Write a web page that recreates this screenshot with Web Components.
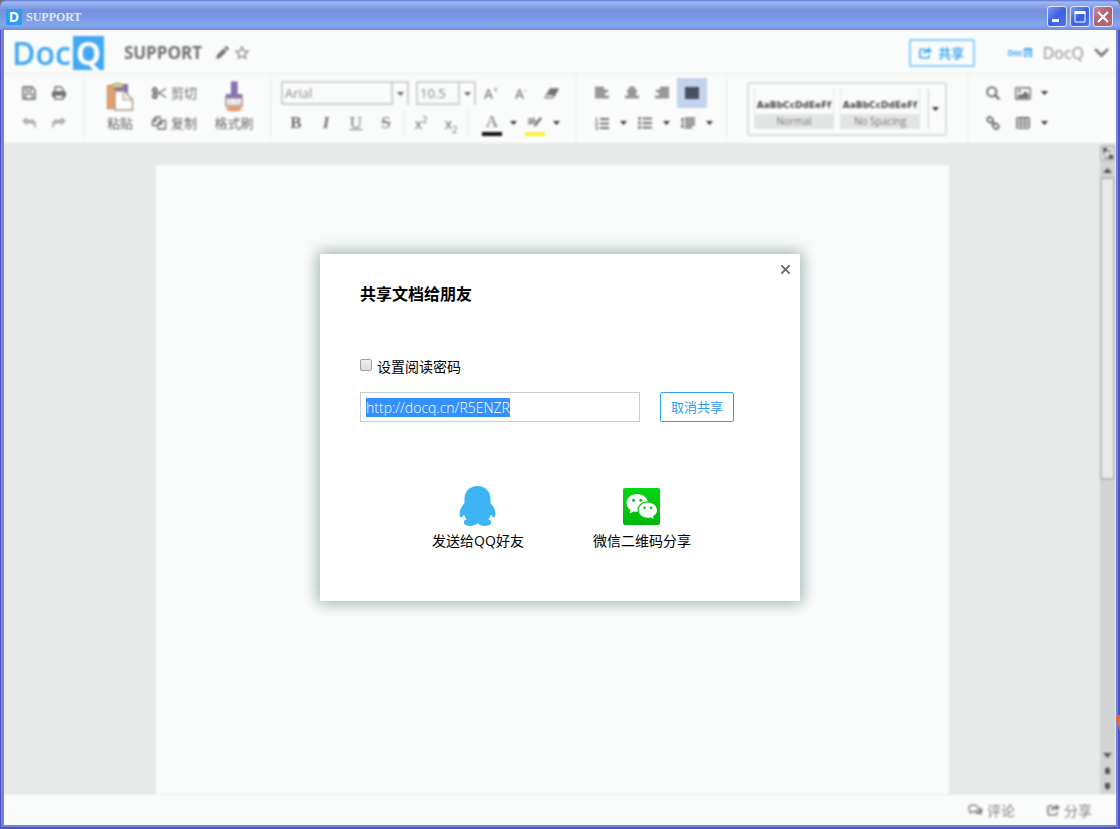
<!DOCTYPE html>
<html lang="zh-CN">
<head>
<meta charset="utf-8">
<title>SUPPORT</title>
<style>
  body { margin: 0; font-family: "Open Sans", "Noto Sans CJK SC", sans-serif; font-size: 14px; color: #000; }
</style>
</head>
<body>
<app-window caption="SUPPORT">
  <doc-editor></doc-editor>
  <share-dialog slot="dialog"></share-dialog>
</app-window>

<script>
const ICONS = {
  save: [14, 14, '<path d="M1 1h9l3 3v9H1z" fill="none" stroke="currentColor" stroke-width="1.6"/><path d="M4 1h5v4H4zM3.500 8h7v5h-7z" fill="none" stroke="currentColor" stroke-width="1.300"/>'],
  print: [14, 14, '<path d="M3 6V1h6l2 2v3" fill="none" stroke="currentColor" stroke-width="1.4"/><path d="M0 7q0-2 2-2h10q2 0 2 2v4h-2V9H2v2H0z" fill="currentColor"/><path d="M2.700 9h8.600v4H2.700z" fill="none" stroke="currentColor" stroke-width="1.400"/>'],
  undo: [14, 14, '<path d="M0 5l5-4v2.500h4q5 0 5 5.500 0 2-1.500 4 .5-5.500-3.500-5.500H5V9.500z" fill="currentColor" opacity=".55"/>'],
  redo: [14, 14, '<path d="M14 5L9 1v2.500H5Q0 3.500 0 9q0 2 1.500 4Q1 7.500 5 7.500h4v2z" fill="currentColor" opacity=".55"/>'],
  paste: [28, 30, '<rect x="1.500" y="3.500" width="20" height="23" fill="#e5a06a" stroke="#b98560"/><rect x="9" y="2" width="13" height="9" fill="#8873b4"/><path d="M6 2.500q6-3 11 0v3H6z" fill="#d9d37a" stroke="#9b966a"/><path d="M9 9h9l8.500 8.500V28H9z" fill="#fff" stroke="#a39488" stroke-width="1.400"/><path d="M17 8v10h9.500z" fill="#eee" stroke="#a39488"/>'],
  brush: [20, 30, '<rect x="7.500" y="0" width="5.500" height="12" fill="#8873b4" stroke="#75639c"/><path d="M1.500 16v-3q0-1 1-1h15q1 0 1 1v3z" fill="#8873b4"/><path d="M2 16h16v8H2z" fill="#fff" stroke="#a08a88" stroke-width="1.500"/><path d="M5.500 17v6M9 19v5M12.500 17v6M15.500 19v5" stroke="#c8bcb8" stroke-width="1.300"/><ellipse cx="10" cy="27" rx="8" ry="2.600" fill="#ee9a6a"/>'],
  cut: [14, 12, '<g fill="none" stroke="currentColor" stroke-width="1.800"><circle cx="2.800" cy="3" r="2"/><circle cx="2.800" cy="9" r="2"/></g><path d="M4.500 4.200L14 10.500M4.500 7.800L14 1.500" stroke="currentColor" stroke-width="1.300"/>'],
  copy: [14, 14, '<g fill="none" stroke="currentColor" stroke-width="1.300"><path d="M5.500 9.500h-5V5L4 1h4v3M4 1v4H.5"/><path d="M6 8l3.500-3.500h4V13H6zM9.500 4.500V8H6"/></g>'],
  eraser: [15, 11, '<path d="M5.500 1q.5-.8 1.500-.8h7q1.200 0 .6 1.200L10 9.500q-.6.900-1.600.900H1.200Q0 10.400.6 9.200z" fill="currentColor"/><path d="M2.800 7h5.400L10 9l-1.600.6H1.500z" fill="#fff" opacity=".75"/>'],
  left: [14, 12, '<path d="M0 1h9M0 4h13M0 7h10M0 10h14" stroke="currentColor" stroke-width="2.400" opacity=".85"/>'],
  center: [14, 12, '<path d="M4 1h6M2 4h10M3 7h8M0 10h14" stroke="currentColor" stroke-width="2.400" opacity=".85"/>'],
  right: [14, 12, '<path d="M5 1h9M1 4h13M4 7h10M0 10h14" stroke="currentColor" stroke-width="2.400" opacity=".85"/>'],
  justify: [14, 12, '<path d="M0 0h14v12H0z" fill="#5a6070"/><path d="M0 1.200h14M0 4.400h14M0 7.600h14M0 10.800h14" stroke="#404858" stroke-width="2.200"/>'],
  numbered: [14, 13, '<path d="M1.500 0v3.500M.5 3.500h2M.5 5.500h2v1.500l-2 1h2M.5 10h2v2.500h-2" fill="none" stroke="currentColor"/><path d="M5 2h9M5 6.500h9M5 11h9" stroke="currentColor" stroke-width="1.800"/>'],
  bullets: [14, 12, '<path d="M0 1.500h3M0 6h3M0 10.500h3" stroke="currentColor" stroke-width="2.400"/><path d="M4.500 1.500H14M4.500 6H14M4.500 10.500H14" stroke="currentColor" stroke-width="1.800"/>'],
  spacing: [14, 12, '<path d="M4 1.500h10M4 4.500h10M4 7.500h10M4 10.500h7" stroke="currentColor" stroke-width="1.800"/><path d="M1.500 1v10M0 2h3M0 10h3" stroke="currentColor" stroke-width="1.500"/>'],
  search: [14, 14, '<circle cx="5.800" cy="5.800" r="4.600" fill="none" stroke="currentColor" stroke-width="2"/><path d="M9.300 9.300l3.500 3.500" stroke="currentColor" stroke-width="2.400" stroke-linecap="round"/>'],
  image: [16, 13, '<rect x=".7" y=".7" width="14.600" height="11.600" rx="1" fill="none" stroke="currentColor" stroke-width="1.400"/><circle cx="4.500" cy="4" r="1.400" fill="currentColor"/><path d="M2.500 11V9L5 6.800l1.600 1.500L10.500 4l3.200 3.500V11z" fill="currentColor"/>'],
  link: [14, 14, '<g fill="none" stroke="currentColor" stroke-width="1.900"><rect x="1" y="1.500" width="6" height="4.600" rx="2.200" transform="rotate(45 4 4)"/><rect x="7" y="8" width="6" height="4.600" rx="2.200" transform="rotate(45 10 10)"/><path d="M5.500 5.500l3.200 3.200"/></g>'],
  table: [14, 12, '<rect x=".7" y=".7" width="12.600" height="10.600" rx="1" fill="none" stroke="currentColor" stroke-width="1.300"/><path d="M0 1.500h14M0 4.700h14M0 7.900h14M5 1v10M9.200 1v10" stroke="currentColor" stroke-width="1.200"/>'],
  caret: [7, 4, '<path d="M0 0h7L3.500 4z" fill="currentColor"/>'],
  caretUp: [9, 5, '<path d="M0 5h9L4.500 0z" fill="currentColor"/>'],
  caretDown: [9, 5, '<path d="M0 0h9L4.500 5z" fill="currentColor"/>'],
  pencil: [13, 13, '<path d="M0 13l1-4 6.500-6.500 3 3L4 12zM8.300 1.700L9.600.4q.7-.6 1.500 0l1.500 1.500q.6.700 0 1.400l-1.300 1.400z" fill="currentColor"/>'],
  star: [14, 13, '<path d="M7 1l1.800 3.800 4.200.5-3.100 2.900.8 4.100L7 10.300l-3.700 2 .8-4.100L1 5.300l4.200-.5z" fill="none" stroke="currentColor" stroke-width="1.300"/>'],
  share: [13, 12, '<path d="M6 2H2.500Q1 2 1 3.500v6Q1 11 2.500 11h6Q10 11 10 9.500V8" fill="none" stroke="currentColor" stroke-width="1.700"/><path d="M9 0l4 3.500L9 7V5Q5.500 4.800 4.500 8.300 3.200 2.200 9 2z" fill="currentColor"/>'],
  comments: [15, 12, '<path d="M5.500 1C2.500 1 .7 2.600.7 4.400c0 1.200.7 2.100 1.800 2.700L2 9l2.300-1.300C8 8 10.300 6.400 10.300 4.400 10.300 2.500 8.300 1 5.500 1z" fill="none" stroke="currentColor" stroke-width="1.300"/><path d="M11.500 3.200c3.800 1.300 4.200 4.400 1.600 6l.9 2.300-3-1.600c-2 .2-3.800-.3-4.700-1.200 3.600 0 5.700-2.200 5.200-5.500z" fill="currentColor"/>'],
  chevron: [15, 9, '<path d="M1 1l6.500 6.500L14 1" fill="none" stroke="currentColor" stroke-width="2.400"/>'],
  layout: [15, 15, '<rect width="15" height="15" fill="#e0e2e1"/><rect x=".7" y=".7" width="13.600" height="13.600" fill="none" stroke="#aaa"/><path d="M4 9V5h7M4 12h6V8" fill="none" stroke="currentColor"/><path d="M3 2h4v3H3zM9 9h4v4H9z" fill="currentColor"/>'],
  prev: [5, 7, '<path d="M0 7V2l2.500-2L5 2v5z" fill="currentColor"/>'],
  next: [5, 7, '<path d="M0 0v5l2.500 2L5 5V0z" fill="currentColor"/>'],
  close: [11, 11, '<path d="M1.300 1.300l8.400 8.400M9.700 1.300L1.300 9.700" stroke="currentColor" stroke-width="1.800"/>'],
  winMin: [12, 12, '<path d="M1 8h7v3H1z" fill="#fff"/>'],
  winMax: [12, 12, '<path d="M1 1.500h10V11H1z" fill="none" stroke="#fff"/><path d="M.5 0h11v3H.5z" fill="#fff"/>'],
  winClose: [12, 12, '<path d="M1 1l10 10M11 1L1 11" stroke="#fff" stroke-width="2.200"/>'],
  highlight: [14, 13, '<path d="M0 4.500q3-2 3.500.5v4M3.500 6Q.5 6 .5 8t3 0M5.500 2v7q3 1 3-1.500T5.500 6" fill="none" stroke="currentColor" stroke-width="1.200"/><path d="M6 12l1-3 5-7 2 1.500-5.500 7z" fill="currentColor"/>'],
  qq: [38, 40, '<path d="M18.500 0C10.500 0 5.500 5.600 5.500 13v4C2.500 20.500.6 24 .6 27.500c0 2.500.7 4 1.600 3.900.9-.1 2-1.500 2.800-3 .6 1.900 1.500 3.500 2.700 4.900-2 .7-2.900 1.700-2.900 2.900C4.800 38.500 7.500 40 11.500 40c3 0 5.600-1.200 7-2.900 1.400 1.700 4 2.900 7 2.900 4 0 6.700-1.500 6.700-3.800 0-1.200-.9-2.200-2.900-2.900 1.200-1.400 2.100-3 2.700-4.900.8 1.500 1.900 2.900 2.800 3 .9.100 1.600-1.400 1.600-3.900 0-3.500-1.900-7-4.900-10.500v-4C31.500 5.600 26.500 0 18.500 0z" fill="#3cb4f6"/>'],
  wechat: [38, 38, '<defs><linearGradient id="g" x2="0" y2="1"><stop stop-color="#05d812"/><stop offset="1" stop-color="#00b80c"/></linearGradient></defs><rect width="37" height="37" rx="2" fill="url(#g)"/><path d="M14.200 6C8.200 6 3.500 10 3.500 15c0 2.900 1.600 5.400 4 7l-.8 3.600 4-2.200c1.100.3 2.300.4 3.500.4 6 0 10.700-3.900 10.700-8.800S20.200 6 14.200 6z" fill="#fff"/><path d="M24.800 13.800c-5.400 0-9.800 3.700-9.800 8.300s4.400 8.300 9.800 8.300c1 0 2-.1 2.900-.4l3.700 2-.8-3.300c2.400-1.500 4-3.900 4-6.600 0-4.600-4.400-8.300-9.800-8.300z" fill="#fff" stroke="#02c80e" stroke-width="1.200"/><g fill="#02c80e"><circle cx="10.600" cy="12.200" r="1.500"/><circle cx="17.800" cy="12.200" r="1.500"/><circle cx="21.500" cy="19.700" r="1.300"/><circle cx="28" cy="19.700" r="1.300"/></g>']
};

function define(name, markup, setup) {
  const template = document.createElement('template');
  template.innerHTML = markup;
  customElements.define(name, class extends HTMLElement {
    connectedCallback() {
      if (this.shadowRoot) return;
      this.attachShadow({ mode: 'open' }).append(template.content.cloneNode(true));
      if (setup) setup(this, this.shadowRoot);
    }
  });
}

define('ui-icon', `
  <style>:host { display: inline-flex; flex: none; } svg { display: block; overflow: visible; }</style>
  <svg aria-hidden="true"></svg>`,
  (host, root) => {
    const [w, h, body] = ICONS[host.getAttribute('name')];
    const svg = root.querySelector('svg');
    svg.setAttribute('width', w);
    svg.setAttribute('height', h);
    svg.setAttribute('viewBox', `0 0 ${w} ${h}`);
    svg.innerHTML = body;
  });

/* Toolbar button: an icon or a short label in a 30px square */
define('tool-button', `
  <style>
    :host { display: block; flex: none; width: 30px; height: 30px; }
    button { all: unset; box-sizing: border-box; width: 100%; height: 100%; display: flex; align-items: center; justify-content: center; cursor: pointer; }
    :host([active]) button { background: #c3d3ee; }
  </style>
  <button type="button"><slot></slot></button>`,
  (host, root) => root.querySelector('button').setAttribute('aria-label', host.getAttribute('label') || ''));

/* Tool button with a drop-down arrow */
define('split-button', `
  <style>
    :host { display: flex; flex: none; height: 30px; }
    button { all: unset; width: 13px; display: flex; align-items: center; justify-content: center; color: #333; cursor: pointer; }
  </style>
  <tool-button><slot></slot></tool-button>
  <button type="button" aria-label="更多"><ui-icon name="caret"></ui-icon></button>`);

/* Tall or inline button with a caption */
define('caption-button', `
  <style>
    :host { display: block; }
    button { all: unset; box-sizing: border-box; width: 100%; display: flex; align-items: center; gap: 5px; font-size: 13px; line-height: 30px; height: 30px; color: #666; cursor: pointer; }
    :host([tall]) button { flex-direction: column; gap: 0; height: 60px; padding-top: 4px; line-height: 22px; }
  </style>
  <button type="button"><slot></slot></button>`);

define('tool-group', `
  <style>
    :host { display: flex; flex: none; align-items: flex-start; padding: 4px 10px 5px; border-right: 1px solid #eceeed; }
    :host([wide]) { padding-inline: 20px; }
    :host([last]) { border: 0; }
  </style>
  <slot></slot>`);

define('combo-box', `
  <style>
    :host { display: grid; grid-template-columns: 1fr 16px; height: 24px; box-sizing: border-box; }
    select { all: unset; grid-area: 1 / 1 / 2 / 3; box-sizing: border-box; width: calc(100% - 16px); min-width: 0; border: 2px solid #cfd0d7; padding-left: 2px; font: 13px/20px "Open Sans", sans-serif; color: #888; }
    span { grid-area: 1 / 2; display: flex; align-items: center; justify-content: center; border: 2px solid #cfd0d2; border-width: 2px 2px 0 0; color: #666; pointer-events: none; }
  </style>
  <select></select><span><ui-icon name="caret"></ui-icon></span>`,
  (host, root) => {
    const select = root.querySelector('select');
    select.setAttribute('aria-label', host.getAttribute('label'));
    select.add(new Option(host.getAttribute('value')));
  });

define('editor-toolbar', `
  <style>
    :host { display: flex; flex: none; border-bottom: 1px solid #e4e6e5; border-top: 1px solid #eceeed; color: #707070; background: #fafcfb; }
    .rows { display: flex; flex-direction: column; }
    .row { display: flex; align-items: center; height: 30px; }
    .clip { display: grid; grid-template-columns: 50px 63px 52px; }
    .clip .rows { padding-left: 7px; }
    combo-box.face { width: 128px; margin-right: 7px; }
    combo-box.size { width: 60px; }
    .serif { font: 17px "Liberation Serif", serif; }
    .sans { font: 14px "Noto Sans", sans-serif; }
    b.serif { font-weight: 700; }
    sup, sub { font-size: 9px; line-height: 0; }
    .rule { width: 1px; height: 28px; background: #eaecec; margin-inline: 2px; }
    .swatch { display: flex; flex-direction: column; align-items: center; justify-content: flex-end; height: 22px; border-bottom: 4px solid #111; width: 20px; line-height: 20px; }
    .swatch.marker { border-color: #fbf03a; justify-content: center; }
    .colors { margin-left: 6px; }
    .styles { display: flex; align-items: center; box-sizing: border-box; width: 200px; height: 54px; margin-top: 4px; padding-left: 5px; gap: 6px; border: 2px solid #dcdedd; border-radius: 2px; }
    .styles button { all: unset; box-sizing: border-box; width: 80px; height: 40px; display: flex; flex-direction: column; justify-content: flex-end; text-align: center; border-inline: 1px solid #e4e6e5; font-size: 10px; line-height: 15px; color: #777; cursor: pointer; }
    .styles b { font: 700 9px/18px "DejaVu Sans", sans-serif; color: #444; }
    .styles button span { background: #e3e5e4; }
    .styles .more { width: 14px; align-items: center; justify-content: center; border: 0; border-left: 1px solid #ccc; margin-left: 2px; color: #333; }
  </style>
  <tool-group>
    <div class="rows">
      <div class="row"><tool-button label="保存"><ui-icon name="save"></ui-icon></tool-button><tool-button label="打印"><ui-icon name="print"></ui-icon></tool-button></div>
      <div class="row"><tool-button label="撤销"><ui-icon name="undo"></ui-icon></tool-button><tool-button label="重做"><ui-icon name="redo"></ui-icon></tool-button></div>
    </div>
  </tool-group>
  <tool-group>
    <div class="clip">
      <caption-button tall><ui-icon name="paste"></ui-icon>粘贴</caption-button>
      <div class="rows">
        <caption-button><ui-icon name="cut"></ui-icon>剪切</caption-button>
        <caption-button><ui-icon name="copy"></ui-icon>复制</caption-button>
      </div>
      <caption-button tall><ui-icon name="brush"></ui-icon>格式刷</caption-button>
    </div>
  </tool-group>
  <tool-group>
    <div class="rows">
      <div class="row">
        <combo-box class="face" label="字体" value="Arial"></combo-box>
        <combo-box class="size" label="字号" value="10.5"></combo-box>
        <tool-button label="增大"><span class="sans">A<sup>+</sup></span></tool-button>
        <tool-button label="减小"><span class="sans">A<sup>-</sup></span></tool-button>
        <tool-button label="清除"><ui-icon name="eraser"></ui-icon></tool-button>
      </div>
      <div class="row">
        <tool-button label="粗体"><b class="serif">B</b></tool-button>
        <tool-button label="斜体"><b class="serif"><i>I</i></b></tool-button>
        <tool-button label="下划线"><u class="serif">U</u></tool-button>
        <tool-button label="删除线"><s class="serif">S</s></tool-button>
        <span class="rule"></span>
        <tool-button label="上标"><span class="sans">x<sup>2</sup></span></tool-button>
        <tool-button label="下标"><span class="sans">x<sub>2</sub></span></tool-button>
        <span class="rule"></span>
        <split-button class="colors"><span class="swatch serif">A</span></split-button>
        <split-button><span class="swatch marker"><ui-icon name="highlight"></ui-icon></span></split-button>
      </div>
    </div>
  </tool-group>
  <tool-group>
    <div class="rows">
      <div class="row">
        <tool-button label="左对齐"><ui-icon name="left"></ui-icon></tool-button>
        <tool-button label="居中"><ui-icon name="center"></ui-icon></tool-button>
        <tool-button label="右对齐"><ui-icon name="right"></ui-icon></tool-button>
        <tool-button label="两端对齐" active><ui-icon name="justify"></ui-icon></tool-button>
      </div>
      <div class="row">
        <split-button><ui-icon name="numbered"></ui-icon></split-button>
        <split-button><ui-icon name="bullets"></ui-icon></split-button>
        <split-button><ui-icon name="spacing"></ui-icon></split-button>
      </div>
    </div>
  </tool-group>
  <tool-group wide>
    <div class="styles">
      <button type="button"><b>AaBbCcDdEeFf</b><span>Normal</span></button>
      <button type="button"><b>AaBbCcDdEeFf</b><span>No Spacing</span></button>
      <button type="button" class="more" aria-label="更多样式"><ui-icon name="caret"></ui-icon></button>
    </div>
  </tool-group>
  <tool-group last>
    <div class="rows">
      <div class="row"><tool-button label="查找"><ui-icon name="search"></ui-icon></tool-button><split-button><ui-icon name="image"></ui-icon></split-button></div>
      <div class="row"><tool-button label="链接"><ui-icon name="link"></ui-icon></tool-button><split-button><ui-icon name="table"></ui-icon></split-button></div>
    </div>
  </tool-group>`);

define('brand-logo', `
  <style>
    :host { display: flex; align-items: center; gap: 2px; font: 600 32px/34px "Open Sans", sans-serif; color: #42a8f2; }
    b { width: 31px; text-align: center; background: #42a8f2; color: #fff; font-weight: 700; }
    :host([mini]) { gap: 1px; font: 700 8px/9px "Open Sans", sans-serif; }
    :host([mini]) b { width: 8px; }
  </style>
  <span>Doc</span><b>Q</b>`);

define('editor-header', `
  <style>
    :host { display: flex; flex: none; align-items: center; box-sizing: border-box; height: 43px; padding: 2px 7px 0 8px; background: #fafcfb; color: #707070; }
    h1 { margin: 0 14px 0 20px; font-size: 17px; line-height: 24px; font-weight: 700; }
    .tools { display: flex; gap: 6px; flex: 1; }
    .tools ui-icon + ui-icon { color: #888; }
    button { all: unset; box-sizing: border-box; display: flex; align-items: center; justify-content: center; gap: 6px; width: 66px; height: 28px; border: 2px solid #8ccbf7; border-radius: 2px; font-size: 13px; font-weight: 700; color: #42a8f2; cursor: pointer; }
    .mini { margin: 0 11px 0 33px; }
    a { display: flex; align-items: center; gap: 10px; font-size: 16px; line-height: 24px; color: #909090; text-decoration: none; }
    a ui-icon { color: #666; }
  </style>
  <brand-logo></brand-logo>
  <h1>SUPPORT</h1>
  <div class="tools"><ui-icon name="pencil"></ui-icon><ui-icon name="star"></ui-icon></div>
  <button type="button"><ui-icon name="share"></ui-icon>共享</button>
  <brand-logo class="mini" mini></brand-logo>
  <a href="#account">DocQ<ui-icon name="chevron"></ui-icon></a>`);

define('page-scrollbar', `
  <style>
    :host { display: flex; flex-direction: column; align-items: center; flex: none; width: 16px; box-sizing: border-box; background: #d2d4d3; color: #555; padding: 2px 1px 4px 0; }
    .up { padding: 7px 0 4px; }
    .thumb { box-sizing: border-box; width: 100%; height: 47%; border: 2px solid #b9bbba; border-radius: 2px; background: #e8eae9; }
    .end { display: flex; flex-direction: column; align-items: center; gap: 9px; margin-top: auto; }
  </style>
  <ui-icon name="layout"></ui-icon>
  <ui-icon class="up" name="caretUp"></ui-icon>
  <div class="thumb"></div>
  <div class="end"><ui-icon name="caretDown"></ui-icon><ui-icon name="prev"></ui-icon><ui-icon name="next"></ui-icon></div>`);

define('status-bar', `
  <style>
    :host { display: flex; flex: none; justify-content: flex-end; gap: 32px; height: 30px; padding-right: 24px; border-top: 1px solid #eceeed; background: #fafcfb; }
    a { display: flex; align-items: center; gap: 4px; font-size: 14px; color: #808080; text-decoration: none; }
  </style>
  <a href="#comments"><ui-icon name="comments"></ui-icon>评论</a>
  <a href="#share"><ui-icon name="share"></ui-icon>分享</a>`);

define('doc-editor', `
  <style>
    :host { display: flex; flex-direction: column; flex: 1; min-height: 0; filter: blur(1px); }
    main { display: flex; flex: 1; min-height: 0; background: #e8eae9; }
    .canvas { flex: 1; display: flex; justify-content: center; padding-top: 21px; }
    .page { width: 793px; background: #fafcfb; }
  </style>
  <editor-header></editor-header>
  <editor-toolbar></editor-toolbar>
  <main><div class="canvas"><div class="page"></div></div><page-scrollbar></page-scrollbar></main>
  <status-bar></status-bar>`);

define('title-bar', `
  <style>
    :host { display: flex; flex: none; align-items: center; gap: 3px; height: 30px; box-sizing: border-box; padding: 3px 7px 0 6px;
      background: linear-gradient(#5b74d0 0, #9db8f0 2px, #8fa9ea 5px, #7790de 10px, #7b97e2 17px, #83a8ec 25px, #7d97e4 28px, #7289dc 100%); }
    .app { width: 16px; background: #2b9df0; color: #fff; font: 700 14px/16px "Open Sans", sans-serif; text-align: center; }
    .caption { flex: 1; margin-left: 1px; font: 700 12px/16px "Liberation Serif", serif; color: #dde8fb; }
    button { all: unset; box-sizing: border-box; display: flex; align-items: center; justify-content: center; width: 20px; height: 21px; border: 1px solid #dfe6fb; border-radius: 3px; background: linear-gradient(135deg, #7f9af0, #3a5fe0 50%, #4a78ee); }
    .close { background: linear-gradient(135deg, #c98c9c, #b0606f 50%, #b56a78); }
  </style>
  <span class="app">D</span><span class="caption"></span>
  <button type="button" aria-label="最小化"><ui-icon name="winMin"></ui-icon></button>
  <button type="button" aria-label="最大化"><ui-icon name="winMax"></ui-icon></button>
  <button type="button" class="close" aria-label="关闭"><ui-icon name="winClose"></ui-icon></button>`);

define('app-window', `
  <style>
    :host { display: flex; flex-direction: column; height: 100vh; position: relative; overflow: hidden; background: #6f7478; }
    .frame { flex: 1; min-height: 0; display: flex; flex-direction: column; border-radius: 7px 7px 0 0; overflow: hidden; background: #7385de; box-shadow: inset 1px 0 #4f52c0, inset -2px 0 #4f52c0, inset 0 -2px #4f52c0; }
    .client { position: relative; flex: 1; min-height: 0; display: flex; flex-direction: column; margin: 0 4px 4px; overflow: hidden; background: #fafcfb; }
    .overlay { position: absolute; inset: 0; display: grid; place-items: center; }
    .edge { position: absolute; right: 0; top: 715px; }
  </style>
  <div class="frame">
    <title-bar></title-bar>
    <div class="client"><slot></slot><div class="overlay"><slot name="dialog"></slot></div></div>
  </div>
  <svg class="edge" width="4" height="17" aria-hidden="true"><path d="M0 3q0-3 4-3v17z" fill="#f4602c"/></svg>`,
  (host, root) => { root.querySelector('title-bar').shadowRoot.querySelector('.caption').textContent = host.getAttribute('caption'); });

define('share-target', `
  <style>
    :host { display: block; }
    a { display: flex; flex-direction: column; align-items: center; gap: 5px; font-size: 14px; line-height: 20px; color: #000; text-decoration: none; }
    .icon { display: flex; align-items: flex-end; height: 40px; }
  </style>
  <a href="#share"><span class="icon"><slot name="icon"></slot></span><slot></slot></a>`);

define('share-dialog', `
  <style>
    :host { display: block; position: relative; box-sizing: border-box; width: 480px; max-width: 100%; padding: 28px 40px 50px; background: #fff; box-shadow: 0 0 15px 2px rgba(90, 118, 122, .6); }
    h2 { margin: 0 0 51px; font-size: 16px; line-height: 24px; }
    .lock { display: flex; align-items: center; gap: 5px; line-height: 20px; }
    .lock input { appearance: none; box-sizing: border-box; width: 12px; height: 12px; margin: 0 0 4px; border: 1px solid #a0a0a0; border-radius: 2px; background: linear-gradient(#eee, #dcdcdc); }
    .link { display: flex; gap: 20px; margin: 15px 0 64px; }
    .link input { box-sizing: border-box; width: 280px; height: 30px; margin: 0; padding: 0 5px; border: 1px solid #ccc; outline: 0; font: 300 14px/18px "Open Sans", sans-serif; color: #000; }
    .link input::selection { background: rgba(51, 143, 255, .99); color: #fff; }
    .link button { all: unset; box-sizing: border-box; width: 74px; height: 30px; border: 1px solid #36a0f0; border-radius: 2px; font-size: 13px; line-height: 28px; text-align: center; color: #2f9bee; cursor: pointer; }
    .targets { display: grid; grid-template-columns: 164px 164px; justify-content: center; }
    .close { all: unset; position: absolute; top: 10px; right: 9px; display: flex; color: #666; cursor: pointer; }
  </style>
  <button class="close" type="button" aria-label="关闭"><ui-icon name="close"></ui-icon></button>
  <h2>共享文档给朋友</h2>
  <div class="lock"><input type="checkbox" id="lock"><label for="lock">设置阅读密码</label></div>
  <div class="link">
    <input type="text" class="url" aria-label="共享链接" value="http://docq.cn/R5ENZR">
    <button type="button">取消共享</button>
  </div>
  <div class="targets">
    <share-target><ui-icon slot="icon" name="qq"></ui-icon>发送给QQ好友</share-target>
    <share-target><ui-icon slot="icon" name="wechat"></ui-icon>微信二维码分享</share-target>
  </div>`,
  (host, root) => {
    const url = root.querySelector('.url');
    const select = () => { url.focus(); url.select(); };
    select();
    window.addEventListener('load', select);
  });
</script>
</body>
</html>
